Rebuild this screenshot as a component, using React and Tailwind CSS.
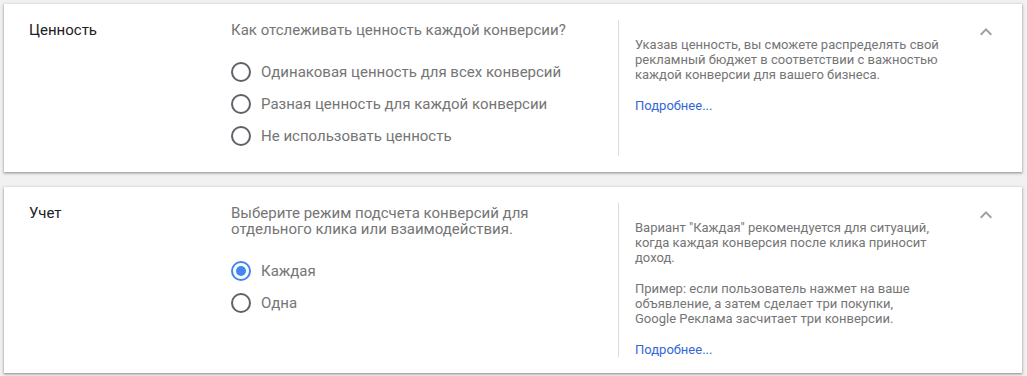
import { useState } from "react";

const sections = [
  {
    title: "Ценность",
    question: ["Как отслеживать ценность каждой конверсии?"],
    options: [
      "Одинаковая ценность для всех конверсий",
      "Разная ценность для каждой конверсии",
      "Не использовать ценность",
    ],
    selected: -1,
    help: [
      [
        "Указав ценность, вы сможете распределять свой",
        "рекламный бюджет в соответствии с важностью",
        "каждой конверсии для вашего бизнеса.",
      ],
    ],
  },
  {
    title: "Учет",
    question: ["Выберите режим подсчета конверсий для", "отдельного клика или взаимодействия."],
    options: ["Каждая", "Одна"],
    selected: 0,
    help: [
      [
        "Вариант \"Каждая\" рекомендуется для ситуаций,",
        "когда каждая конверсия после клика приносит",
        "доход.",
      ],
      [
        "Пример: если пользователь нажмет на ваше",
        "объявление, а затем сделает три покупки,",
        "Google Реклама засчитает три конверсии.",
      ],
    ],
  },
];

function Radio({ checked }) {
  return checked ? (
    <span className="w-5 h-5 rounded-full border-2 border-[#4285f4] flex items-center justify-center flex-none">
      <span className="w-[10px] h-[10px] rounded-full bg-[#4285f4]" />
    </span>
  ) : (
    <span className="w-5 h-5 rounded-full border-2 border-[#5f6368] flex-none" />
  );
}

function Section({ section }) {
  const [selected, setSelected] = useState(section.selected);

  return (
    <div className="bg-white flex py-4 pl-[25px] pr-6 shadow-[0_1px_2px_rgba(0,0,0,0.3),0_1px_3px_1px_rgba(0,0,0,0.12)]">
      {/* Title */}
      <div className="w-[202px] flex-none text-[15px] leading-5 text-[#202124]">
        {section.title}
      </div>

      {/* Question + options */}
      <div className="w-[387px] flex-none pt-[2px] pb-1">
        <p className="text-[15px] leading-4 text-[#757575]">
          {section.question.map((line, i) => (
            <span key={i} className="block">{line}</span>
          ))}
        </p>
        <div className="mt-[18px]">
          {section.options.map((opt, i) => (
            <label
              key={opt}
              onClick={() => setSelected(i)}
              className="h-8 flex items-center gap-[10px] cursor-pointer"
            >
              <Radio checked={selected === i} />
              <span className="text-[15px] text-[#757575]">{opt}</span>
            </label>
          ))}
        </div>
      </div>

      {/* Help */}
      <div className="border-l border-[#dadce0] pl-4 pt-[17px] flex-none">
        <div className="w-[318px] text-[13px] leading-[15px] text-[#757575] space-y-4">
          {section.help.map((p, i) => (
            <p key={i}>
              {p.map((line, j) => (
                <span key={j} className="block">{line}</span>
              ))}
            </p>
          ))}
          <a href="#" className="block text-[#3367d6]">Подробнее...</a>
        </div>
      </div>

      {/* Chevron */}
      <div className="ml-auto flex-none">
        <svg width="24" height="24" viewBox="0 0 24 24" className="text-[#9aa0a6]">
          <path fill="currentColor" d="M12 8l-6 6 1.41 1.41L12 10.83l4.59 4.58L18 14z" />
        </svg>
      </div>
    </div>
  );
}

export default function App() {
  return (
    <div className="min-h-[376px] bg-[#f1f1f1] pt-1 pl-1 pr-[5px] flex flex-col gap-[15px] font-['Roboto',sans-serif]">
      {sections.map((s) => (
        <Section key={s.title} section={s} />
      ))}
    </div>
  );
}
